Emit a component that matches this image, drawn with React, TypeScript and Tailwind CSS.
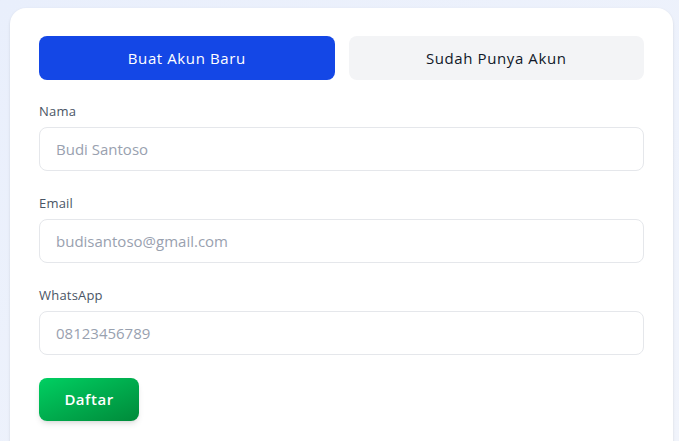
import React, { useState } from 'react';

const fields = [
  { label: 'Nama', placeholder: 'Budi Santoso', type: 'text' },
  { label: 'Email', placeholder: 'budisantoso@gmail.com', type: 'email' },
  { label: 'WhatsApp', placeholder: '08123456789', type: 'tel' },
];

const App = () => {
  const [tab, setTab] = useState<'register' | 'login'>('register');

  return (
    <div className="min-h-screen bg-gradient-to-br from-[#e9effc] to-[#f1f4fb] pl-[10px] pr-[6px] pt-[8px] font-['Open_Sans',sans-serif]">
      <div className="rounded-t-2xl bg-white px-[29px] pt-[28px] pb-8 shadow-sm">
        <div className="grid grid-cols-2 gap-[14px]">
          <button
            onClick={() => setTab('register')}
            className={`h-[44px] rounded-lg text-[15px] font-medium tracking-[0.6px] ${tab === 'register' ? 'bg-[#1447e6] text-white' : 'bg-gray-100 text-gray-900'}`}
          >
            Buat Akun Baru
          </button>
          <button
            onClick={() => setTab('login')}
            className={`h-[44px] rounded-lg text-[15px] font-medium tracking-[0.6px] ${tab === 'login' ? 'bg-[#1447e6] text-white' : 'bg-gray-100 text-gray-900'}`}
          >
            Sudah Punya Akun
          </button>
        </div>

        <form className="mt-[21px] flex flex-col gap-[22px]" onSubmit={(e) => e.preventDefault()}>
          {fields.map((f) => (
            <div key={f.label} className="flex flex-col gap-1.5">
              <label className="text-[13px] leading-5 tracking-[0.2px] text-gray-600">{f.label}</label>
              <input
                type={f.type}
                placeholder={f.placeholder}
                className="h-[44px] rounded-lg border border-gray-200 px-4 text-[15px] text-gray-900 placeholder:text-gray-400 outline-none"
              />
            </div>
          ))}
          <div className="pt-px">
            <button
              type="submit"
              className="h-[43px] w-[100px] rounded-lg bg-gradient-to-br from-[#00d062] to-[#008a3a] text-[15px] font-semibold tracking-[0.5px] text-white shadow-md"
            >
              Daftar
            </button>
          </div>
        </form>
      </div>
    </div>
  );
};

export default App;
